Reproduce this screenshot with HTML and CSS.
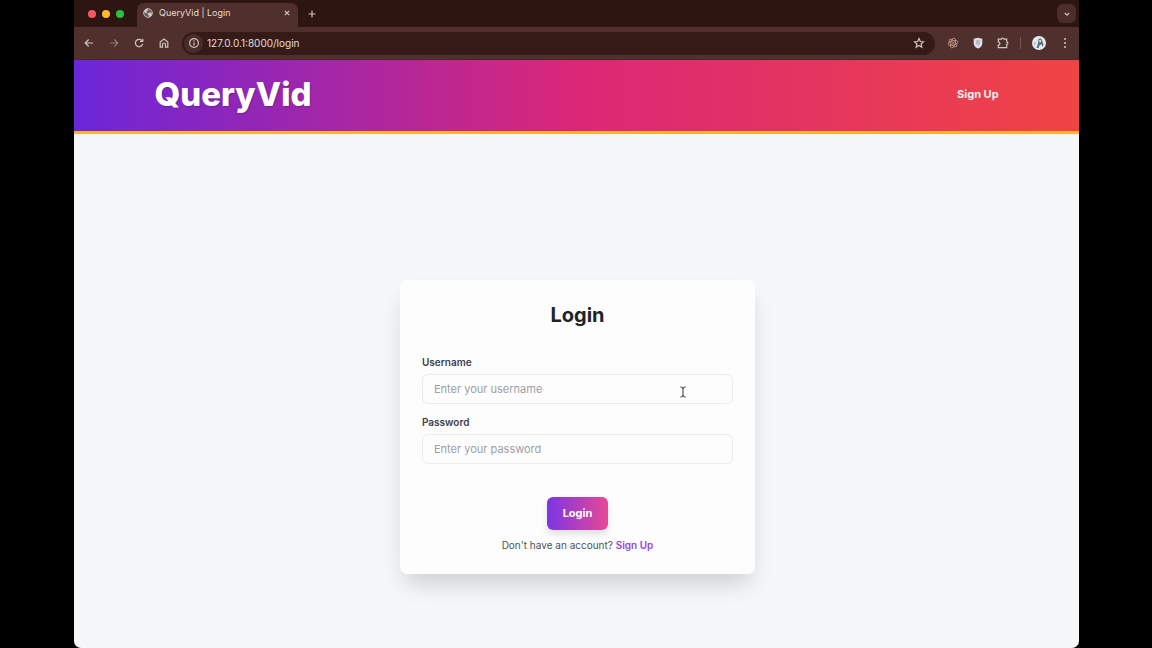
FILE: index.html
```html
<!DOCTYPE html>
<html lang="en">
<head>
<meta charset="utf-8">
<meta name="viewport" content="width=device-width, initial-scale=1">
<title>QueryVid | Login</title>
<link rel="stylesheet" href="styles.css">
</head>
<body class="desktop">
<div class="window">
  <div class="tabstrip">
    <div class="lights"><span class="light red"></span><span class="light yellow"></span><span class="light green"></span></div>
    <div class="tab">
      <svg class="favicon" viewBox="0 0 10 10" aria-hidden="true"><circle cx="5" cy="5" r="4.4" fill="#6b5f5e" stroke="#d3c9c6" stroke-width=".8"/><path d="M1 3.500 2.600 1.200 5 .8 4.800 2.500 3.500 3.200 4 4.800 2.600 5.200zM4.500 5.200 7 4.600 9.200 5.400 8 8 6 9 5.600 7z" fill="#d3c9c6"/></svg>
      <span class="tab-title">QueryVid | Login</span>
      <button class="chrome-btn" aria-label="Close tab"><svg width="8" height="8" viewBox="0 0 8 8"><path d="M1.800 1.800l4.400 4.400M6.200 1.800l-4.400 4.400"/></svg></button>
    </div>
    <button class="chrome-btn new-tab" aria-label="New tab"><svg width="10" height="10" viewBox="0 0 10 10"><path d="M5 1.500v7M1.500 5h7"/></svg></button>
    <button class="chrome-btn tab-search" aria-label="Search tabs"><svg width="8" height="8" viewBox="0 0 8 8"><path d="M1.800 3 4 5.200 6.200 3"/></svg></button>
  </div>
  <div class="toolbar">
    <div class="nav-buttons">
      <button class="chrome-btn" aria-label="Back"><svg width="12" height="12" viewBox="0 0 12 12"><path d="M10 6H2.200M5.700 2.500 2.200 6l3.500 3.500"/></svg></button>
      <button class="chrome-btn dim" aria-label="Forward"><svg width="12" height="12" viewBox="0 0 12 12"><path d="M2 6H9.800M6.300 2.500 9.800 6l-3.500 3.500"/></svg></button>
      <button class="chrome-btn" aria-label="Reload"><svg width="12" height="12" viewBox="0 0 12 12"><path d="M9.200 4A3.700 3.700 0 1 0 9.700 6.800M9.800 1.800v2.700H7"/></svg></button>
      <button class="chrome-btn" aria-label="Home"><svg width="12" height="12" viewBox="0 0 12 12"><path d="M2.200 5 6 2 9.800 5v5.200H7.500V7.500a1.500 1.500 0 0 0-3 0v2.700H2.200z"/></svg></button>
    </div>
    <div class="address">
      <button class="chrome-btn site-info" aria-label="Site information"><svg width="12" height="12" viewBox="0 0 12 12"><circle cx="6" cy="6" r="4.400"/><path d="M6 5.400v3M6 3.300v1.200"/></svg></button>
      <input class="url" type="text" aria-label="Address" value="127.0.0.1:8000/login">
      <button class="chrome-btn" aria-label="Bookmark"><svg width="12" height="12" viewBox="0 0 12 12"><path d="M6 1.500 7.300 4.500 10.500 4.800 8.100 7 8.800 10.200 6 8.500 3.200 10.200 3.900 7 1.500 4.800 4.700 4.500z"/></svg></button>
    </div>
    <div class="extensions">
      <button class="chrome-btn" aria-label="React tools"><svg width="12" height="12" viewBox="0 0 12 12"><g style="stroke:#bd9d94;stroke-width:.8"><ellipse cx="6" cy="6" rx="5" ry="2.200" transform="rotate(-15 6 6)"/><ellipse cx="6" cy="6" rx="5" ry="2.200" transform="rotate(45 6 6)"/><ellipse cx="6" cy="6" rx="5" ry="2.200" transform="rotate(105 6 6)"/></g><circle cx="6" cy="6" r="1.200" style="fill:#d94d45;stroke:none"/></svg></button>
      <button class="chrome-btn" aria-label="Shield"><svg width="12" height="12" viewBox="0 0 12 12"><path d="M6 .7 10.300 1.800v4.400C10.300 8.700 8.500 10.600 6 11.500 3.500 10.600 1.700 8.700 1.700 6.200V1.800z" style="fill:#dce0e3;stroke:none"/><path d="M6 2.800 8 3.500V6C8 7.200 7.200 8.200 6 8.800 4.800 8.200 4 7.200 4 6V3.500z" style="fill:#b3bbc3;stroke:none"/></svg></button>
      <button class="chrome-btn" aria-label="Extensions"><svg width="12" height="12" viewBox="0 0 12 12"><path d="M1.300 2.200H4.500a1.200 1.200 0 0 1 2.400 0H9.700V5a1.200 1.200 0 0 1 0 2.400v3.200H1.300V8a1.600 1.600 0 0 0 0-3.200z"/></svg></button>
      <span class="divider"></span>
      <button class="chrome-btn" aria-label="Profile"><svg width="14" height="14" viewBox="0 0 14 14"><circle cx="7" cy="7" r="7" style="fill:#e3eaf0;stroke:none"/><path d="M6.500 3 9 2.200 10.200 5 11.500 8.500 10.500 11 9.500 8 7.500 9.500 6.500 12 4.500 12 6 7.500z" style="fill:#5c6a7c;stroke:none"/><path d="M7.200 4.200 8.700 3.800 9 6 7.600 6.500z" style="fill:#f3f3f3;stroke:none"/><path d="M2 6.500 4 5.500 3.500 8.500 2.300 9.500z" style="fill:#a9bacb;stroke:none"/></svg></button>
      <button class="chrome-btn" aria-label="Menu"><svg width="12" height="12" viewBox="0 0 12 12"><g style="fill:#d0bfbb;stroke:none"><circle cx="6" cy="2" r="1"/><circle cx="6" cy="6" r="1"/><circle cx="6" cy="10" r="1"/></g></svg></button>
    </div>
  </div>
  <header class="site-header">
    <a class="brand" href="#">QueryVid</a>
    <nav class="site-nav"><a class="nav-link" href="#">Sign Up</a></nav>
  </header>
  <main class="page">
    <form class="card">
      <h1 class="heading">Login</h1>
      <div class="field">
        <label class="label" for="username">Username</label>
        <input class="input" id="username" type="text" placeholder="Enter your username">
      </div>
      <div class="field">
        <label class="label" for="password">Password</label>
        <input class="input" id="password" type="password" placeholder="Enter your password">
      </div>
      <button class="submit" type="button">Login</button>
      <p class="hint">Don't have an account? <a class="hint-link" href="#">Sign Up</a></p>
    </form>
  </main>
</div>
<svg class="cursor" viewBox="0 0 8 12" aria-hidden="true"><path d="M1.500 1Q4 1 4 2.500 4 1 6.500 1M4 2v8M1.500 11Q4 11 4 9.500 4 11 6.500 11"/></svg>
</body>
</html>
```
FILE: styles.css
```css
* { box-sizing: border-box; }

.desktop {
  margin: 0;
  padding: 0 73px 0 74px;
  min-height: 100vh;
  display: flex;
  background: #000;
  font-family: Inter, "Liberation Sans", sans-serif;
}

.window {
  flex: 1;
  min-width: 0;
  display: flex;
  flex-direction: column;
  overflow: hidden;
  border-radius: 0 0 7px 7px;
  background: #f6f7f9;
}

button { font: inherit; cursor: pointer; }
a { text-decoration: none; }

.chrome-btn {
  display: grid;
  place-items: center;
  flex: none;
  padding: 0;
  border: 0;
  background: none;
}
.chrome-btn svg {
  fill: none;
  stroke: #d2c3bf;
  stroke-width: 1.2;
}
.dim { opacity: .5; }

.tabstrip {
  display: flex;
  align-items: center;
  height: 27px;
  padding-right: 3px;
  background: #2d1512;
}
.lights { display: flex; gap: 6px; padding: 0 13px 0 14px; }
.light { width: 8px; height: 8px; border-radius: 50%; }
.red { background: #f65765; }
.yellow { background: #fcbc2e; }
.green { background: #27c141; }

.tab {
  align-self: flex-end;
  display: flex;
  align-items: center;
  gap: 6px;
  width: 161px;
  height: 24px;
  padding: 0 7px 4px 6px;
  border-radius: 7px 7px 0 0;
  background: #4f302d;
}
.favicon { width: 10px; height: 10px; }
.tab-title { flex: 1; font-size: 9px; line-height: 12px; color: #e6dbd8; }
.new-tab { margin-left: 9px; }
.tab-search {
  width: 19px;
  height: 19px;
  margin-left: auto;
  border-radius: 6px;
  background: #4c2d2a;
}

.toolbar {
  display: flex;
  align-items: center;
  height: 33px;
  padding: 0 8px 0 9px;
  border-bottom: 1px solid #472927;
  background: #4f302d;
}
.nav-buttons { display: flex; gap: 13px; }
.address {
  flex: 1;
  min-width: 0;
  display: flex;
  align-items: center;
  gap: 4px;
  height: 23px;
  margin: 0 12px;
  padding: 0 10px 0 2px;
  border-radius: 12px;
  background: #341b18;
}
.site-info { width: 19px; height: 19px; border-radius: 50%; background: #4a2d2a; }
.url {
  flex: 1;
  min-width: 0;
  padding: 0;
  border: 0;
  outline: 0;
  background: none;
  color: #e6dbd8;
  font: 10px/14px Inter, "Liberation Sans", sans-serif;
}
.extensions { display: flex; align-items: center; gap: 13px; }
.divider { width: 1px; height: 12px; margin: 0 -2px; background: #78524c; }

.site-header {
  display: flex;
  align-items: center;
  justify-content: space-between;
  height: 74px;
  padding: 0 8% 4px;
  border-bottom: 3px solid #fbb52d;
  background: linear-gradient(to right, #6b26d9, #db2777 50%, #ef4444);
}
.brand {
  color: #fff;
  font-size: 33px;
  line-height: 42px;
  font-weight: 800;
  text-shadow: 1px 1px 1px rgba(0, 0, 0, .2);
}
.site-nav { display: flex; }
.nav-link { color: #fdf0f1; font-size: 11px; line-height: 16px; font-weight: 700; }

.page { flex: 1; padding: 146px 16px 74px 18px; }
.card {
  display: flex;
  flex-direction: column;
  max-width: 355px;
  margin: 0 auto;
  padding: 22px;
  border-radius: 7px;
  background: #fdfdfd;
  box-shadow: 0 14px 24px -5px rgba(0, 0, 0, .17);
}
.heading {
  margin: 0 0 28px;
  text-align: center;
  color: #202427;
  font-size: 20px;
  line-height: 26px;
  font-weight: 700;
}
.field { display: flex; flex-direction: column; gap: 6px; margin-bottom: 12px; }
.label { color: #3b414c; font-size: 10px; line-height: 12px; font-weight: 600; }
.input {
  width: 100%;
  height: 30px;
  padding: 0 11px;
  border: 1px solid #e9ebed;
  border-radius: 6px;
  background: #fdfdfd;
  color: #30343a;
  font: 11px/16px Inter, "Liberation Sans", sans-serif;
}
.input::placeholder { color: #9b9fa6; opacity: 1; }
.submit {
  align-self: center;
  margin-top: 21px;
  padding: 8px 16px 9px;
  border: 0;
  border-radius: 6px;
  background: linear-gradient(to right, #7c35e5, #e84894);
  box-shadow: 0 4px 7px rgba(0, 0, 0, .12);
  color: #fff;
  font-size: 11px;
  line-height: 16px;
  font-weight: 700;
}
.hint {
  margin: 8px 0 0;
  text-align: center;
  color: #4c525c;
  font-size: 10px;
  line-height: 14px;
}
.hint-link { color: #9645dc; font-weight: 600; }

.cursor {
  position: absolute;
  left: 679px;
  top: 386px;
  width: 8px;
  height: 12px;
  fill: none;
  stroke: #33363a;
  pointer-events: none;
}
```
